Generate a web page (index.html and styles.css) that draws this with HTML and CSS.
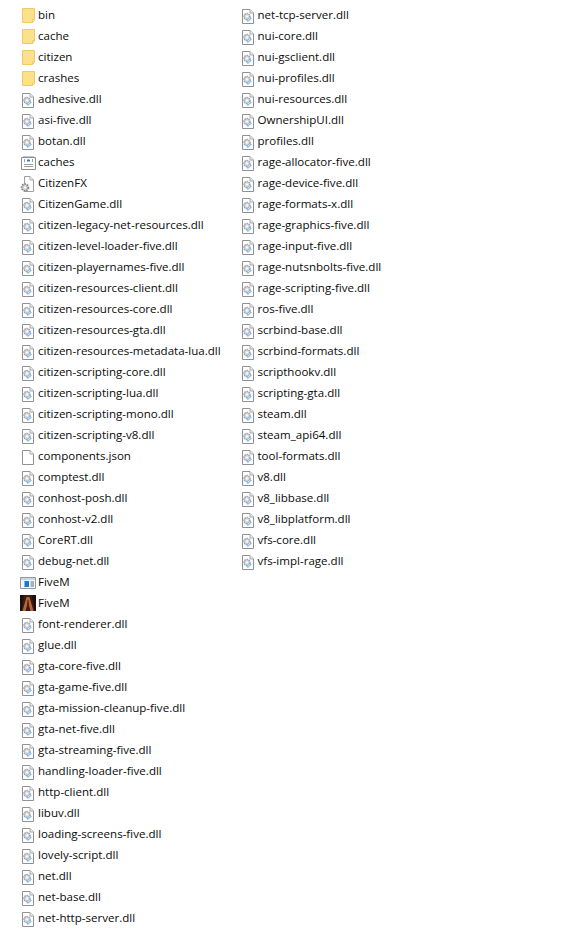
FILE: index.html
```html
<!DOCTYPE html>
<html>
<head>
  <title>FiveM files</title>
  <link rel="stylesheet" href="styles.css">
</head>
<body>
<svg class="defs" width="0" height="0">
  <symbol id="i-folder" viewBox="0 0 16 18">
    <path d="M2.5 2.5H14.5V14.5L12.5 16.5H2.5Z" fill="#fde08a" stroke="#efca66"/>
    <path d="M12.5 16.5V13.5H14.5" fill="#fff3c4" stroke="#efca66"/>
  </symbol>
  <symbol id="i-dll" viewBox="0 0 16 18">
    <path d="M2.5 3.5H10L13.5 7V17.5H2.5Z" fill="#fff" stroke="#919191"/>
    <path d="M10 3.5V7H13.5" fill="#eee" stroke="#a8a8a8"/>
    <circle cx="7" cy="10.5" r="3" fill="#d8dbde" stroke="#a2a7ab" stroke-width="1.5" stroke-dasharray="1.6 .6"/>
    <circle cx="7" cy="10.5" r="1" fill="#fff"/>
    <path d="M7 15L11 11.5" stroke="#8dbce4" stroke-width="2.4"/>
    <path d="M8 14L10 12.2" stroke="#d5e8f7"/>
  </symbol>
  <symbol id="i-config" viewBox="0 0 16 18">
    <path d="M1.5 4.5H15.5V16.5H1.5Z" fill="#fff" stroke="#8f8f8f"/>
    <path d="M3 3.5H14" stroke="#c0c8d0"/>
    <path d="M7 7.5H10" stroke="#2f7fd0" stroke-width="2"/>
    <path d="M4.5 6V9M12.5 6V9M4 11.5H13M4 13.5H13" stroke="#a0a0a0"/>
  </symbol>
  <symbol id="i-app" viewBox="0 0 16 18">
    <path d="M4.5 2.5H10L13.5 6V17.5H4.5Z" fill="#fff" stroke="#a0a0a0"/>
    <path d="M10 2.5V6H13.5" fill="#eee" stroke="#a8a8a8"/>
    <circle cx="5" cy="13.5" r="3.4" fill="#d0d0d0" stroke="#8a8a8a" stroke-width="1.8" stroke-dasharray="1.6 .9"/>
    <circle cx="5" cy="13.5" r="1.1" fill="#fff"/>
  </symbol>
  <symbol id="i-json" viewBox="0 0 16 18">
    <path d="M2.5 3.5H10L13.5 7V17.5H2.5Z" fill="#fff" stroke="#919191"/>
    <path d="M10 3.5V7H13.5" fill="#f2f2f2" stroke="#a8a8a8"/>
  </symbol>
  <symbol id="i-window" viewBox="0 0 16 18">
    <path d="M.5 4.5H15.5V15.5H.5Z" fill="#f6f8fa" stroke="#8f9aa5"/>
    <path d="M1 5H15V7H1Z" fill="#c9d6e3"/>
    <path d="M4.5 8H9V14H4.5Z" fill="#1a78d0"/>
    <path d="M10.5 9H14M10.5 11H14M10.5 13H14" stroke="#5d6975"/>
  </symbol>
  <symbol id="i-game" viewBox="0 0 16 18">
    <path d="M0 1H16V17H0Z" fill="#3a1c12"/>
    <path d="M0 1H4L1.5 17H0ZM12 1H16V17H14.5Z" fill="#20110c"/>
    <path d="M6.5 3H9.5L13.5 17H10.5L8 8L5.5 17H2.5Z" fill="#b5653a"/>
    <path d="M7.5 6H8.5L9 13H7Z" fill="#4a2214"/>
  </symbol>
</svg>
<div class="listing">
  <ul class="column column-left">
    <li><svg class="icon"><use href="#i-folder"/></svg>bin</li>
    <li><svg class="icon"><use href="#i-folder"/></svg>cache</li>
    <li><svg class="icon"><use href="#i-folder"/></svg>citizen</li>
    <li><svg class="icon"><use href="#i-folder"/></svg>crashes</li>
    <li><svg class="icon"><use href="#i-dll"/></svg>adhesive.dll</li>
    <li><svg class="icon"><use href="#i-dll"/></svg>asi-five.dll</li>
    <li><svg class="icon"><use href="#i-dll"/></svg>botan.dll</li>
    <li><svg class="icon"><use href="#i-config"/></svg>caches</li>
    <li><svg class="icon"><use href="#i-app"/></svg>CitizenFX</li>
    <li><svg class="icon"><use href="#i-dll"/></svg>CitizenGame.dll</li>
    <li><svg class="icon"><use href="#i-dll"/></svg>citizen-legacy-net-resources.dll</li>
    <li><svg class="icon"><use href="#i-dll"/></svg>citizen-level-loader-five.dll</li>
    <li><svg class="icon"><use href="#i-dll"/></svg>citizen-playernames-five.dll</li>
    <li><svg class="icon"><use href="#i-dll"/></svg>citizen-resources-client.dll</li>
    <li><svg class="icon"><use href="#i-dll"/></svg>citizen-resources-core.dll</li>
    <li><svg class="icon"><use href="#i-dll"/></svg>citizen-resources-gta.dll</li>
    <li><svg class="icon"><use href="#i-dll"/></svg>citizen-resources-metadata-lua.dll</li>
    <li><svg class="icon"><use href="#i-dll"/></svg>citizen-scripting-core.dll</li>
    <li><svg class="icon"><use href="#i-dll"/></svg>citizen-scripting-lua.dll</li>
    <li><svg class="icon"><use href="#i-dll"/></svg>citizen-scripting-mono.dll</li>
    <li><svg class="icon"><use href="#i-dll"/></svg>citizen-scripting-v8.dll</li>
    <li><svg class="icon"><use href="#i-json"/></svg>components.json</li>
    <li><svg class="icon"><use href="#i-dll"/></svg>comptest.dll</li>
    <li><svg class="icon"><use href="#i-dll"/></svg>conhost-posh.dll</li>
    <li><svg class="icon"><use href="#i-dll"/></svg>conhost-v2.dll</li>
    <li><svg class="icon"><use href="#i-dll"/></svg>CoreRT.dll</li>
    <li><svg class="icon"><use href="#i-dll"/></svg>debug-net.dll</li>
    <li><svg class="icon"><use href="#i-window"/></svg>FiveM</li>
    <li><svg class="icon"><use href="#i-game"/></svg>FiveM</li>
    <li><svg class="icon"><use href="#i-dll"/></svg>font-renderer.dll</li>
    <li><svg class="icon"><use href="#i-dll"/></svg>glue.dll</li>
    <li><svg class="icon"><use href="#i-dll"/></svg>gta-core-five.dll</li>
    <li><svg class="icon"><use href="#i-dll"/></svg>gta-game-five.dll</li>
    <li><svg class="icon"><use href="#i-dll"/></svg>gta-mission-cleanup-five.dll</li>
    <li><svg class="icon"><use href="#i-dll"/></svg>gta-net-five.dll</li>
    <li><svg class="icon"><use href="#i-dll"/></svg>gta-streaming-five.dll</li>
    <li><svg class="icon"><use href="#i-dll"/></svg>handling-loader-five.dll</li>
    <li><svg class="icon"><use href="#i-dll"/></svg>http-client.dll</li>
    <li><svg class="icon"><use href="#i-dll"/></svg>libuv.dll</li>
    <li><svg class="icon"><use href="#i-dll"/></svg>loading-screens-five.dll</li>
    <li><svg class="icon"><use href="#i-dll"/></svg>lovely-script.dll</li>
    <li><svg class="icon"><use href="#i-dll"/></svg>net.dll</li>
    <li><svg class="icon"><use href="#i-dll"/></svg>net-base.dll</li>
    <li><svg class="icon"><use href="#i-dll"/></svg>net-http-server.dll</li>
  </ul>
  <ul class="column">
    <li><svg class="icon"><use href="#i-dll"/></svg>net-tcp-server.dll</li>
    <li><svg class="icon"><use href="#i-dll"/></svg>nui-core.dll</li>
    <li><svg class="icon"><use href="#i-dll"/></svg>nui-gsclient.dll</li>
    <li><svg class="icon"><use href="#i-dll"/></svg>nui-profiles.dll</li>
    <li><svg class="icon"><use href="#i-dll"/></svg>nui-resources.dll</li>
    <li><svg class="icon"><use href="#i-dll"/></svg>OwnershipUI.dll</li>
    <li><svg class="icon"><use href="#i-dll"/></svg>profiles.dll</li>
    <li><svg class="icon"><use href="#i-dll"/></svg>rage-allocator-five.dll</li>
    <li><svg class="icon"><use href="#i-dll"/></svg>rage-device-five.dll</li>
    <li><svg class="icon"><use href="#i-dll"/></svg>rage-formats-x.dll</li>
    <li><svg class="icon"><use href="#i-dll"/></svg>rage-graphics-five.dll</li>
    <li><svg class="icon"><use href="#i-dll"/></svg>rage-input-five.dll</li>
    <li><svg class="icon"><use href="#i-dll"/></svg>rage-nutsnbolts-five.dll</li>
    <li><svg class="icon"><use href="#i-dll"/></svg>rage-scripting-five.dll</li>
    <li><svg class="icon"><use href="#i-dll"/></svg>ros-five.dll</li>
    <li><svg class="icon"><use href="#i-dll"/></svg>scrbind-base.dll</li>
    <li><svg class="icon"><use href="#i-dll"/></svg>scrbind-formats.dll</li>
    <li><svg class="icon"><use href="#i-dll"/></svg>scripthookv.dll</li>
    <li><svg class="icon"><use href="#i-dll"/></svg>scripting-gta.dll</li>
    <li><svg class="icon"><use href="#i-dll"/></svg>steam.dll</li>
    <li><svg class="icon"><use href="#i-dll"/></svg>steam_api64.dll</li>
    <li><svg class="icon"><use href="#i-dll"/></svg>tool-formats.dll</li>
    <li><svg class="icon"><use href="#i-dll"/></svg>v8.dll</li>
    <li><svg class="icon"><use href="#i-dll"/></svg>v8_libbase.dll</li>
    <li><svg class="icon"><use href="#i-dll"/></svg>v8_libplatform.dll</li>
    <li><svg class="icon"><use href="#i-dll"/></svg>vfs-core.dll</li>
    <li><svg class="icon"><use href="#i-dll"/></svg>vfs-impl-rage.dll</li>
  </ul>
</div>
</body>
</html>
```

FILE: styles.css
```css
* {
  box-sizing: border-box;
}
body {
  margin: 0;
  background-color: #fff;
  color: #0a0a0a;
  font-family: "Open Sans", "Noto Sans", sans-serif;
  font-size: 11.55px;
}
.defs {
  display: block;
  height: 0;
}
.listing {
  display: flex;
  padding: 4px 0 0 20px;
}
.column {
  list-style-type: none;
  margin: 0;
  padding: 0;
}
.column-left {
  width: 219.5px;
}
.column li {
  display: flex;
  align-items: center;
  gap: 2px;
  height: 21px;
  white-space: nowrap;
}
.icon {
  flex: none;
  width: 16px;
  height: 18px;
}
```
